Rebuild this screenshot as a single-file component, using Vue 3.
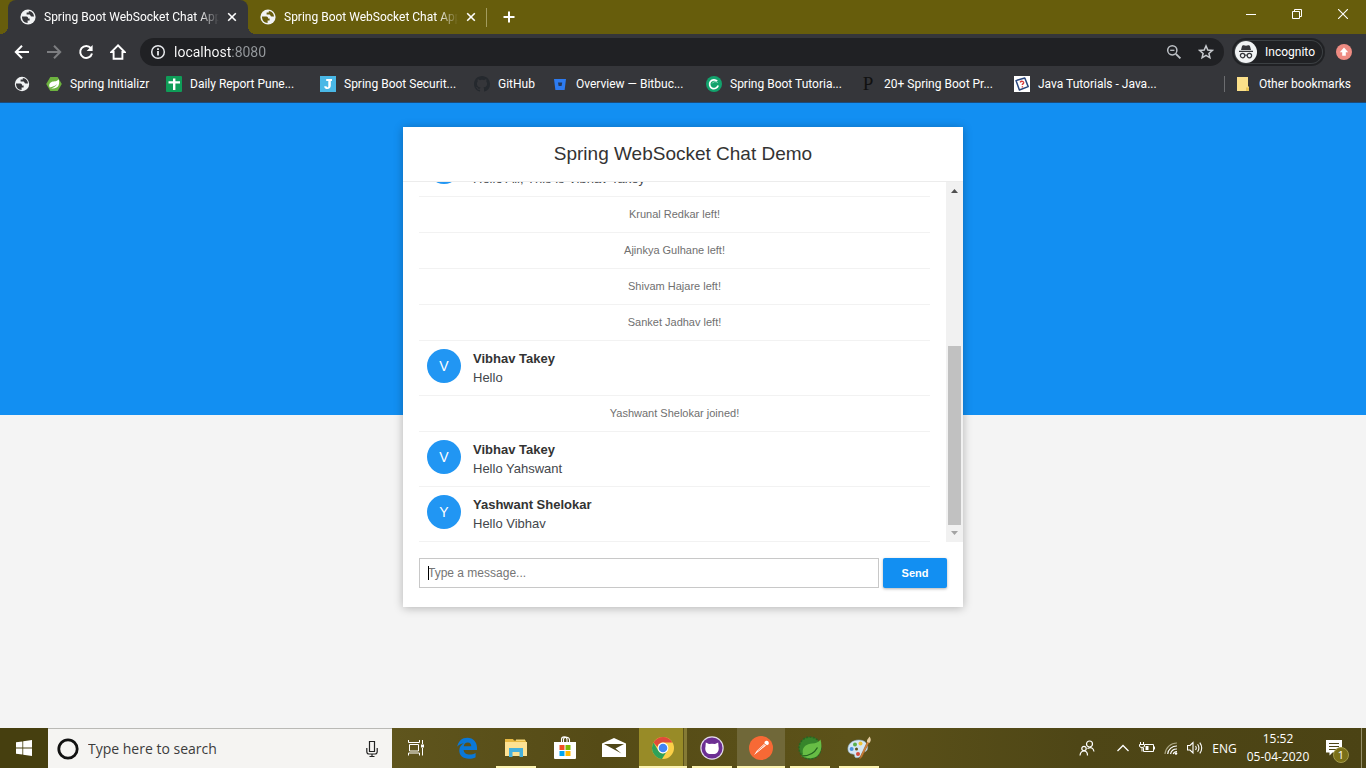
<script setup>
import { ref } from 'vue'

const tabs = [
  { id: 1, title: 'Spring Boot WebSocket Chat App', active: true },
  { id: 2, title: 'Spring Boot WebSocket Chat App', active: false },
]

const bookmarks = [
  { icon: 'globe', label: '', size: 'icon-only' },
  { icon: 'spring', label: 'Spring Initializr', size: 'medium' },
  { icon: 'sheet', label: 'Daily Report Pune...', size: 'long' },
  { icon: 'j', label: 'Spring Boot Securit...', size: 'long' },
  { icon: 'github', label: 'GitHub', size: 'short' },
  { icon: 'bitbucket', label: 'Overview — Bitbuc...', size: 'long' },
  { icon: 'ring', label: 'Spring Boot Tutoria...', size: 'long' },
  { icon: 'p', label: '20+ Spring Boot Pr...', size: 'long' },
  { icon: 'java', label: 'Java Tutorials - Java...', size: 'long' },
]

const messages = [
  { sender: 'Vibhav Takey', text: 'Hello All, This is Vibhav Takey' },
  { event: 'Krunal Redkar left!' },
  { event: 'Ajinkya Gulhane left!' },
  { event: 'Shivam Hajare left!' },
  { event: 'Sanket Jadhav left!' },
  { sender: 'Vibhav Takey', text: 'Hello' },
  { event: 'Yashwant Shelokar joined!' },
  { sender: 'Vibhav Takey', text: 'Hello Yahswant' },
  { sender: 'Yashwant Shelokar', text: 'Hello Vibhav' },
]

const apps = [
  { id: 'edge', label: 'Microsoft Edge' },
  { id: 'explorer', label: 'File Explorer', open: true },
  { id: 'store', label: 'Microsoft Store' },
  { id: 'mail', label: 'Mail' },
  { id: 'chrome', label: 'Google Chrome', focused: true },
  { id: 'ghdesktop', label: 'GitHub Desktop', open: true },
  { id: 'postman', label: 'Postman', lit: true },
  { id: 'sts', label: 'Spring Tool Suite', open: true },
  { id: 'paint', label: 'Paint', open: true },
]

const address = ref('localhost:8080')
const draft = ref('')
const search = ref('')
</script>

<template>
  <div class="desktop">
    <header class="browser">
      <div class="tab-strip">
        <div v-for="tab in tabs" :key="tab.id" class="tab" :class="{ active: tab.active }">
          <svg class="globe" viewBox="0 0 16 16" aria-hidden="true">
            <circle cx="8" cy="8" r="7.6" fill="#f1f3f4" />
            <path d="M2 7.6 H6.4 C7.6 7.6 8 8.4 8 9.4 H9.6 V11.4 H7.6 V14 C4.4 14 1.8 11.4 2 7.6Z M8.8 2 V3.6 H6.6 V5.6 H9.4 C10.4 5.6 10.4 7.6 11.6 7.6 H14 C14 4.6 11.6 2.2 8.8 2Z" :fill="tab.active ? '#35363a' : '#675d0c'" />
          </svg>
          <span class="tab-title">{{ tab.title }}</span>
          <button class="tab-close" aria-label="Close tab">
            <svg viewBox="0 0 10 10"><path d="M1.2 1.2 8.8 8.8M8.8 1.2 1.2 8.8" stroke="#fff" stroke-width="1.6" /></svg>
          </button>
        </div>
        <button class="new-tab" aria-label="New tab">
          <svg viewBox="0 0 12 12"><path d="M6 0.5V11.5M0.5 6H11.5" stroke="#fff" stroke-width="2" /></svg>
        </button>
        <div class="window-controls">
          <button aria-label="Minimise"><svg viewBox="0 0 10 10"><path d="M0 5.5H10" stroke="#fff" /></svg></button>
          <button aria-label="Restore"><svg viewBox="0 0 10 10"><path d="M0.5 2.5H7.5V9.5H0.5ZM2.5 2.5V0.5H9.5V7.5H7.5" stroke="#fff" fill="none" /></svg></button>
          <button aria-label="Close"><svg viewBox="0 0 10 10"><path d="M0 0 10 10M10 0 0 10" stroke="#fff" stroke-width="1.1" /></svg></button>
        </div>
      </div>

      <div class="toolbar">
        <button class="nav" aria-label="Back"><svg viewBox="0 0 16 16"><path d="M15 8H2.5M8 1.8 1.8 8 8 14.2" stroke="#fff" stroke-width="2" fill="none" /></svg></button>
        <button class="nav" aria-label="Forward"><svg viewBox="0 0 16 16"><path d="M1 8H13.5M8 1.8 14.2 8 8 14.2" stroke="#7d7e81" stroke-width="2" fill="none" /></svg></button>
        <button class="nav" aria-label="Reload"><svg viewBox="0 0 16 16"><path d="M12.9 4.2A6 6 0 1 0 14 9.5" stroke="#fff" stroke-width="2" fill="none" /><path d="M14.6 1V7H8.6Z" fill="#fff" /></svg></button>
        <button class="nav" aria-label="Home"><svg viewBox="0 0 16 16"><path d="M8 1.3 1.4 8H3.6V14.8H12.4V8H14.6Z" stroke="#fff" stroke-width="1.9" fill="none" /></svg></button>
        <div class="omnibox">
          <svg class="glyph" viewBox="0 0 16 16" aria-hidden="true"><circle cx="8" cy="8" r="6.3" stroke="#e8eaed" stroke-width="1.5" fill="none" /><path d="M8 7V11.6M8 4.2V6" stroke="#e8eaed" stroke-width="1.8" /></svg>
          <input v-model="address" class="address" type="text" aria-label="Address" />
          <button class="glyph" aria-label="Zoom"><svg viewBox="0 0 16 16"><circle cx="6.3" cy="6.3" r="4.6" stroke="#bdc1c6" stroke-width="1.5" fill="none" /><path d="M4.2 6.3H8.4" stroke="#bdc1c6" stroke-width="1.3" /><path d="M9.8 9.8 14.4 14.4" stroke="#bdc1c6" stroke-width="1.9" /></svg></button>
          <button class="glyph" aria-label="Bookmark this page"><svg viewBox="0 0 16 16"><path d="M8 1.9 9.8 6 14.3 6.4 10.9 9.4 11.9 13.8 8 11.4 4.1 13.8 5.1 9.4 1.7 6.4 6.2 6Z" stroke="#c7cace" stroke-width="1.5" fill="none" /></svg></button>
        </div>
        <button class="incognito">
          <svg viewBox="0 0 22 22" aria-hidden="true"><circle cx="11" cy="11" r="11" fill="#f1f3f4" /><path d="M7 5.2C7.3 4.2 8 4 8.8 4.3L11 4.8 13.2 4.3C14 4 14.7 4.2 15 5.2L16 9H6ZM4 9.8H18V11H4Z" fill="#35363a" /><circle cx="7.6" cy="14.6" r="2.2" stroke="#35363a" stroke-width="1.2" fill="none" /><circle cx="14.4" cy="14.6" r="2.2" stroke="#35363a" stroke-width="1.2" fill="none" /><path d="M9.8 14.4Q11 13.6 12.2 14.4" stroke="#35363a" fill="none" /></svg>
          <span>Incognito</span>
        </button>
        <button class="update" aria-label="Update available"><svg viewBox="0 0 16 16"><circle cx="8" cy="8" r="8" fill="#ee8b82" /><path d="M8 3.6 12.2 8.2H9.8V11.8H6.2V8.2H3.8Z" fill="#fff" /></svg></button>
      </div>

      <nav class="bookmarks" aria-label="Bookmarks">
        <a v-for="b in bookmarks" :key="b.icon" href="#" class="bookmark" :class="b.size" :aria-label="b.label || 'Site'">
          <span v-if="b.icon === 'p'" class="serif-p" aria-hidden="true">P</span>
          <svg v-else viewBox="0 0 16 16" aria-hidden="true">
            <template v-if="b.icon === 'globe'">
              <circle cx="8" cy="8" r="7.2" fill="#f1f3f4" />
              <path d="M2 7.6 H6.4 C7.6 7.6 8 8.4 8 9.4 H9.6 V11.4 H7.6 V14 C4.4 14 1.8 11.4 2 7.6Z M8.8 2 V3.6 H6.6 V5.6 H9.4 C10.4 5.6 10.4 7.6 11.6 7.6 H14 C14 4.6 11.6 2.2 8.8 2Z" fill="#35363a" />
            </template>
            <template v-else-if="b.icon === 'spring'">
              <path d="M4.3 1H11.7L15.8 8 11.7 15H4.3L0.2 8Z" fill="#6db33f" />
              <path d="M12.7 3.2C13.7 6.5 13.2 10 10.5 11.6 8.3 12.9 5.6 12.6 3.7 12.8 6.5 12.2 9.4 11 11.2 8 8.8 10.2 6.4 11 3.6 11.4 2.5 9 3.5 6.6 6 5.8 8.5 5 11 5.6 12.7 3.2Z" fill="#fff" />
            </template>
            <template v-else-if="b.icon === 'sheet'">
              <rect width="16" height="16" rx="1" fill="#0f9d58" />
              <path d="M7 2.5H9.4V5.2H14V7.5H9.4V14H7V7.5H2.5V5.2H7Z" fill="#fff" />
            </template>
            <template v-else-if="b.icon === 'j'">
              <rect width="16" height="16" fill="#4ab8e6" />
              <path d="M6.2 3H12V5H10.8V9.6C10.8 12 9.4 13 7.4 13 5.5 13 4.2 12.1 4.2 10.2H6.6C6.6 11 7 11.3 7.4 11.3 8 11.3 8.3 10.9 8.3 10V5H6.2Z" fill="#fff" />
            </template>
            <template v-else-if="b.icon === 'github'">
              <path d="M8 0C3.58 0 0 3.58 0 8c0 3.54 2.29 6.53 5.47 7.59.4.07.55-.17.55-.38 0-.19-.01-.82-.01-1.49-2.01.37-2.53-.49-2.69-.94-.09-.23-.48-.94-.82-1.13-.28-.15-.68-.52-.01-.53.63-.01 1.08.58 1.23.82.72 1.21 1.87.87 2.33.66.07-.52.28-.87.51-1.07-1.78-.2-3.64-.89-3.64-3.95 0-.87.31-1.59.82-2.15-.08-.2-.36-1.02.08-2.12 0 0 .67-.21 2.2.82.64-.18 1.32-.27 2-.27s1.36.09 2 .27c1.53-1.04 2.2-.82 2.2-.82.44 1.1.16 1.92.08 2.12.51.56.82 1.27.82 2.15 0 3.07-1.87 3.75-3.65 3.95.29.25.54.73.54 1.48 0 1.07-.01 1.93-.01 2.2 0 .21.15.46.55.38A8.01 8.01 0 0 0 16 8c0-4.42-3.58-8-8-8Z" fill="#25292e" />
            </template>
            <template v-else-if="b.icon === 'bitbucket'">
              <path d="M2 3H14L12.6 14H3.4Z" fill="#2d7bf0" />
              <path d="M6 6.4H10.2L9.6 10H6.6Z" fill="#24395c" />
            </template>
            <template v-else-if="b.icon === 'ring'">
              <circle cx="8" cy="8" r="8" fill="#12a36d" />
              <path d="M11.2 5.2A4.4 4.4 0 1 0 12.2 9.6" stroke="#fff" stroke-width="1.7" fill="none" />
              <path d="M11.6 6.6A3.4 3.4 0 0 0 6.2 7.4" stroke="#9fe0c6" stroke-width="1" fill="none" />
            </template>
            <template v-else>
              <rect width="16" height="16" fill="#fff" />
              <path d="M2 4.6 10.8 2 14.2 10.6 5.4 14Z" stroke="#28457c" stroke-width="1.5" fill="none" stroke-linejoin="round" />
              <path d="M6.2 6.4C7 4.8 10 5 9.6 7 9.3 8 8.2 7.8 8.3 9M8.4 10.2V11.4" stroke="#d33a3a" stroke-width="1.4" fill="none" />
            </template>
          </svg>
          <span v-if="b.label">{{ b.label }}</span>
        </a>
        <button class="bookmark other">
          <svg viewBox="0 0 16 16" aria-hidden="true"><path d="M2 1H13V10L14 11V15H2Z" fill="#fbe08a" /><path d="M11 15V11.5H14V15Z" fill="#e9c558" /></svg>
          <span>Other bookmarks</span>
        </button>
      </nav>
    </header>

    <main class="page">
      <section class="chat">
        <h2>Spring WebSocket Chat Demo</h2>
        <div class="viewport">
          <ul>
            <li v-for="(m, i) in messages" :key="i" :class="m.event ? 'event' : 'message'">
              <p v-if="m.event">{{ m.event }}</p>
              <template v-else>
                <i class="avatar">{{ m.sender[0] }}</i>
                <div class="body">
                  <strong>{{ m.sender }}</strong>
                  <p>{{ m.text }}</p>
                </div>
              </template>
            </li>
          </ul>
          <div class="scrollbar" aria-hidden="true">
            <svg viewBox="0 0 17 17"><path d="M5 11H12L8.5 7Z" fill="#505050" /></svg>
            <div class="track"><div class="thumb"></div></div>
            <svg viewBox="0 0 17 17"><path d="M5 6H12L8.5 10Z" fill="#a3a3a3" /></svg>
          </div>
        </div>
        <form class="composer" @submit.prevent>
          <div class="field">
            <input v-model="draft" type="text" placeholder="Type a message..." aria-label="Message" autocomplete="off" />
          </div>
          <button type="submit">Send</button>
        </form>
      </section>
    </main>

    <footer class="taskbar">
      <button class="start" aria-label="Start"><svg viewBox="0 0 16 16"><path d="M0 2.3 6.4 1.4V7.6H0ZM7.2 1.3 16 0V7.6H7.2ZM0 8.4H6.4V14.6L0 13.7ZM7.2 8.4H16V16L7.2 14.7Z" fill="#fff" /></svg></button>
      <div class="search">
        <svg class="cortana" viewBox="0 0 22 22" aria-hidden="true"><circle cx="11" cy="11" r="9.2" stroke="#111" stroke-width="2.8" fill="none" /></svg>
        <input v-model="search" type="text" placeholder="Type here to search" aria-label="Type here to search" />
        <button aria-label="Speak"><svg viewBox="0 0 12 18"><path d="M3.5 1.5H8.5V11.5H3.5ZM0.8 8V11.5Q0.8 14 3 14H9Q11.2 14 11.2 11.5V8M6 14V16.5M3.5 16.5H8.5" stroke="#222" stroke-width="1.2" fill="none" /></svg></button>
      </div>
      <button class="task-view" aria-label="Task view"><svg viewBox="0 0 16 16"><path d="M0.5 0V2.5H11.5V0M0.5 15.5V13H11.5V15.5M1.5 4.5H10.5V11H1.5ZM14.5 0V4M14.5 8V15.5" stroke="#fff" fill="none" /><rect x="13" y="4.5" width="3" height="3" fill="#fff" /></svg></button>
      <div class="apps">
        <button v-for="a in apps" :key="a.id" :aria-label="a.label" :class="{ open: a.open, focused: a.focused, lit: a.lit }">
          <svg viewBox="0 0 24 24" aria-hidden="true">
            <template v-if="a.id === 'edge'">
              <path d="M2.2 10.7C3.3 5 7 1.7 12.3 1.7 18.4 1.7 22 6.2 22 11.6V14H8.6C8.8 17.2 11.5 18.6 14.7 18.6 16.8 18.6 18.8 18 20.6 16.9V21.2C18.6 22.2 16.3 22.7 13.8 22.7 8 22.7 4.3 19.5 4.3 14.5 4.3 11.2 6 8.6 9 7.2 5.8 7.5 3.5 8.9 2.2 10.7ZM8.7 10.3H16.3C16.3 8 15 6.5 12.8 6.5 10.5 6.5 9 8 8.7 10.3Z" fill="#0a78d7" />
            </template>
            <template v-else-if="a.id === 'explorer'">
              <path d="M1 3H9L10 4.5H22V20H1Z" fill="#e8b942" /><path d="M1 6H23V20H1Z" fill="#fde293" /><path d="M12 3.5H21V5H12Z" fill="#f7d774" />
              <path d="M5 12H19V21H15.5V16H8.5V21H5Z" fill="#46b1dc" />
            </template>
            <template v-else-if="a.id === 'store'">
              <path d="M8.5 6V3.5C8.5 0 14 0 14 3.5V6M10.5 6V3.5C10.5 0.5 16.5 0.5 16.5 4V6" stroke="#fff" stroke-width="1.1" fill="none" />
              <path d="M1 6H23V22Q23 23 22 23H2Q1 23 1 22Z" fill="#fff" />
              <path d="M6.5 9H11.5V14H6.5Z" fill="#f25022" /><path d="M12.5 9H17.5V14H12.5Z" fill="#7fba00" /><path d="M6.5 15H11.5V20H6.5Z" fill="#00a4ef" /><path d="M12.5 15H17.5V20H12.5Z" fill="#ffb900" />
            </template>
            <template v-else-if="a.id === 'mail'">
              <path d="M0 7.5 12 2 24 7.5V21H0Z" fill="#fff" /><path d="M2 8H22L13.5 12.5 19.5 17.5Z" fill="#4f4718" />
            </template>
            <template v-else-if="a.id === 'chrome'">
              <circle cx="12" cy="12" r="11" fill="#fbd048" /><path d="M2.5 6.5A11 11 0 0 1 21.5 6.5H12A5.5 5.5 0 0 0 6.5 11Z" fill="#e04a3a" /><path d="M2.5 6.5A11 11 0 0 0 11 23L16 15A5 5 0 0 1 7.3 14.7Z" fill="#2fa158" />
              <circle cx="12" cy="12" r="5.4" fill="#fff" /><circle cx="12" cy="12" r="4.3" fill="#4285f4" />
            </template>
            <template v-else-if="a.id === 'ghdesktop'">
              <circle cx="12" cy="12" r="11.7" fill="#e4dcec" /><circle cx="12" cy="12" r="10.5" fill="#6c2e93" />
              <path d="M5.8 6.5 9 8.1Q12 7.5 15 8.1L18.2 6.5 18.5 10.5C19.5 14.5 17.5 17.5 14.5 18H9.5C6.5 17.5 4.5 14.5 5.5 10.5Z" fill="#fff" />
            </template>
            <template v-else-if="a.id === 'postman'">
              <circle cx="12" cy="12" r="12" fill="#f76935" /><path d="M5 19 8 14.5 15 8 17 9.5 9.5 15.5ZM15.5 7.5A2.2 2.2 0 1 1 18 9.2Z" fill="#fff" /><path d="M8.5 15 15.8 8.7" stroke="#f76935" stroke-width=".7" />
            </template>
            <template v-else-if="a.id === 'sts'">
              <circle cx="12" cy="12" r="11" fill="#36852b" stroke="#2a6521" stroke-width="1.6" stroke-dasharray="2 1.4" /><path d="M22.5 3.5C25 12 22 19.5 16 21.5 11.5 23 7.5 21.5 3.5 20.5L5 18C3.5 11.5 8 8 14 7.5 18 7.2 20.5 6.3 22.5 3.5Z" fill="#67bd45" /><path d="M4 20C11 20 16.5 17 19.5 11.5" stroke="#24641f" stroke-width="1.3" fill="none" />
            </template>
            <template v-else>
              <path d="M1 14C0 8 6 3.8 12 4 18 4.2 21.5 8 20.5 12.5 19.5 17 16 15 15 17.5 14 20 12.5 22.5 8.5 21.5 7 21 8.5 18.5 6.5 18.2 4.5 18 1.5 17.5 1 14Z" fill="#d5e7f3" stroke="#8fb0c8" stroke-width=".6" />
              <circle cx="4.6" cy="13" r="2" fill="#4a93dd" /><circle cx="8" cy="8.5" r="2" fill="#59b04b" /><circle cx="13.5" cy="7.5" r="2" fill="#edc338" /><circle cx="11" cy="18" r="2" fill="#d64b3d" /><circle cx="9.5" cy="13" r="1.5" fill="#5b5119" />
              <path d="M20.5 5.5 13.5 20.5 12.5 23 14.8 21 22 6.5Z" fill="#d98b3d" stroke="#a25e25" stroke-width=".7" /><path d="M20 6C19.5 3 22 2.5 22.2 0.5 24.5 2.5 24 5.5 22.3 7Z" fill="#e8cfa2" />
            </template>
          </svg>
        </button>
      </div>
      <div class="tray">
        <button class="people" aria-label="People"><svg viewBox="0 0 16 16"><circle cx="10.5" cy="4" r="3" stroke="#fff" stroke-width="1.2" fill="none" /><circle cx="5" cy="8.5" r="2.2" stroke="#fff" stroke-width="1.2" fill="none" /><path d="M1 15.5Q1.5 11 5 11 8.5 11 8.5 15.5M8.5 8.5Q14 6 15 11.5" stroke="#fff" stroke-width="1.2" fill="none" /></svg></button>
        <button aria-label="Show hidden icons"><svg viewBox="0 0 16 16"><path d="M2.5 11 8 5.5 13.5 11" stroke="#fff" stroke-width="1.3" fill="none" /></svg></button>
        <button aria-label="Battery"><svg viewBox="0 0 16 16"><path d="M6 4.5H14.5V11.5H4.5V8M15.5 6.5V9.5M1.5 2V4M4.5 2V4M0.5 4.5H5.5V6Q5.5 7.5 3 7.5 0.5 7.5 0.5 6ZM3 7.5V11.5" stroke="#fff" fill="none" /><path d="M6.5 6H9.5V10H6.5Z" fill="#fff" /></svg></button>
        <button aria-label="Network"><svg viewBox="0 0 16 16"><path d="M2 14A12 12 0 0 1 14 3" stroke="#aaa582" stroke-width="1.2" fill="none" /><path d="M4.7 14A9 9 0 0 1 14 6M7.5 14A6.5 6.5 0 0 1 14 9M10.2 14A4 4 0 0 1 14 11.5" stroke="#fff" stroke-width="1.2" fill="none" /><circle cx="13" cy="13.5" r="1.3" fill="#fff" /></svg></button>
        <button aria-label="Volume"><svg viewBox="0 0 16 16"><path d="M0.5 5.5H3L6 2.5V13L3 10H0.5ZM8.5 6Q10 8 8.5 10M10.6 4.2Q13.2 8 10.6 11.8M12.8 2.6Q16.6 8 12.8 13.4" stroke="#fff" stroke-width="1.1" fill="none" /></svg></button>
        <button class="lang">ENG</button>
        <button class="clock"><span>15:52</span><span>05-04-2020</span></button>
        <button class="notify" aria-label="Notifications">
          <svg viewBox="0 0 16 16"><path d="M0 0H16V12.5H6.5L3.5 15.5V12.5H0Z" fill="#fff" /><path d="M3 3.5H13M3 6.5H13M3 9.5H10" stroke="#4e4616" /></svg>
          <span class="badge">1</span>
        </button>
        <button class="show-desktop" aria-label="Show desktop"></button>
      </div>
    </footer>
  </div>
</template>

<style>
body {
  margin: 0;
}
</style>

<style scoped>
* {
  box-sizing: border-box;
}
.desktop {
  min-height: 100vh;
  display: flex;
  flex-direction: column;
  font-family: "Open Sans", "Noto Sans", sans-serif;
  font-size: 12px;
}
button {
  border: 0;
  padding: 0;
  margin: 0;
  background: none;
  color: inherit;
  font: inherit;
  display: flex;
  align-items: center;
  justify-content: center;
  flex: none;
}
input {
  border: 0;
  padding: 0;
  margin: 0;
  background: none;
  font: inherit;
  min-width: 0;
  outline: none;
}
svg {
  display: block;
  flex: none;
}

/* browser */
.browser {
  background: #35363a;
  color: #fff;
  border-bottom: 1px solid #1d4a78;
  font-family: Roboto, "Open Sans", sans-serif;
}
.tab-strip {
  height: 34px;
  padding-left: 8px;
  display: flex;
  background: #675d0c;
}
.tab {
  width: 240px;
  height: 34px;
  padding: 0 11px 0 12px;
  display: flex;
  align-items: center;
  position: relative;
}
.tab:not(.active) {
  width: 239px;
}
.tab:not(.active)::after {
  content: "";
  position: absolute;
  right: 0;
  top: 8px;
  height: 19px;
  border-right: 1px solid #a39c5e;
}
.tab.active {
  background: #35363a;
  border-radius: 8px 8px 0 0;
}
.tab.active::before,
.tab.active::after {
  content: "";
  position: absolute;
  bottom: 0;
  width: 8px;
  height: 8px;
}
.tab.active::before {
  left: -8px;
  background: radial-gradient(circle at 0 0, transparent 8px, #35363a 8px);
}
.tab.active::after {
  right: -8px;
  background: radial-gradient(circle at 100% 0, transparent 8px, #35363a 8px);
}
.globe {
  width: 16px;
  height: 16px;
}
.tab-title {
  flex: 1;
  margin: 0 6px 0 8px;
  overflow: hidden;
  white-space: nowrap;
  mask-image: linear-gradient(to left, transparent 2px, #000 22px);
}
.tab-close {
  width: 10px;
  height: 10px;
}
.tab-close svg,
.window-controls svg {
  width: 10px;
  height: 10px;
}
.new-tab {
  width: 44px;
}
.new-tab svg {
  width: 12px;
  height: 12px;
}
.window-controls {
  margin-left: auto;
  height: 28px;
  display: flex;
}
.window-controls button {
  width: 46px;
}
.toolbar {
  height: 35px;
  padding: 0 14px;
  display: flex;
  align-items: center;
  gap: 16px;
}
.nav,
.nav svg {
  width: 16px;
  height: 16px;
}
.omnibox {
  flex: 1;
  height: 28px;
  margin: 0 -8px 0 -2px;
  padding: 0 10px;
  display: flex;
  align-items: center;
  gap: 16px;
  border-radius: 14px;
  background: #202124;
}
.glyph,
.glyph svg {
  width: 16px;
  height: 16px;
}
.address {
  flex: 1;
  margin-left: -8px;
  font-size: 14px;
  color: transparent;
  background: linear-gradient(to right, #fff 57px, #969a9e 57px);
  background-clip: text;
}
.incognito {
  height: 28px;
  padding: 0 10px 0 3px;
  gap: 8px;
  border-radius: 14px;
  background: #202124;
  box-shadow: inset 0 0 0 2px #202124, inset 0 0 0 3px #3c4043;
  font-size: 12px;
}
.incognito svg {
  width: 22px;
  height: 22px;
}
.update {
  margin-left: -5px;
}
.update svg {
  width: 16px;
  height: 16px;
}
.bookmarks {
  height: 33px;
  padding: 0 7px 3px 6px;
  display: flex;
  align-items: center;
}
.bookmark {
  padding: 0 8px;
  display: flex;
  align-items: center;
  justify-content: flex-start;
  gap: 8px;
  white-space: nowrap;
  color: #fff;
  text-decoration: none;
}
.bookmark svg {
  width: 16px;
  height: 16px;
}
.icon-only {
  width: 32px;
}
.short {
  width: 78px;
}
.medium {
  width: 120px;
}
.long {
  width: 154px;
}
.other {
  margin-left: auto;
  padding-left: 10px;
  border-left: 1px solid #6c6d70;
}
.serif-p {
  width: 16px;
  text-align: center;
  font: 19px "Liberation Serif", serif;
  color: #111;
}

/* chat page */
.page {
  flex: 1;
  padding: 24px 16px;
  background: linear-gradient(#128ff2 50%, #f4f4f4 50%);
  font-family: "Liberation Sans", Arial, sans-serif;
  color: #333;
}
.chat {
  max-width: 560px;
  margin: 0 auto;
  background: #fff;
  box-shadow: 0 1px 9px rgba(0, 0, 0, 0.27);
}
.chat h2 {
  margin: 0;
  padding: 12px 16px;
  border-bottom: 1px solid #ececec;
  text-align: center;
  font-size: 19px;
  line-height: 30px;
  font-weight: 400;
}
.viewport {
  height: 360px;
  display: flex;
}
.viewport ul {
  flex: 1;
  margin: 0;
  padding: 0 16px;
  overflow: hidden;
  display: flex;
  flex-direction: column;
  justify-content: flex-end;
  list-style: none;
}
.viewport li {
  flex: none;
  border-bottom: 1px solid #f2f2f2;
}
.viewport p {
  margin: 0;
}
.event {
  padding: 8px 0;
  text-align: center;
  color: #707070;
  font-size: 11px;
  line-height: 19px;
}
.message {
  padding: 8px;
  display: flex;
  gap: 12px;
  font-size: 13px;
  line-height: 19px;
}
.avatar {
  width: 34px;
  height: 34px;
  border-radius: 50%;
  background: #2196f3;
  color: #fff;
  text-align: center;
  font-style: normal;
  font-size: 14px;
  line-height: 34px;
}
.body strong {
  display: block;
}
.body p {
  color: #43464b;
}
.scrollbar {
  width: 17px;
  display: flex;
  flex-direction: column;
  background: #f1f1f1;
}
.scrollbar svg {
  width: 17px;
  height: 17px;
}
.track {
  flex: 1;
  padding: 0 2px;
  display: flex;
  align-items: flex-end;
}
.thumb {
  width: 100%;
  height: 55%;
  background: #c1c1c1;
}
.composer {
  padding: 16px 16px 19px;
  display: flex;
  gap: 4px;
}
.field {
  flex: 1;
  display: flex;
  position: relative;
}
.field::before {
  content: "";
  position: absolute;
  left: 9px;
  top: 8px;
  width: 1px;
  height: 14px;
  background: #000;
}
.field input {
  flex: 1;
  height: 30px;
  padding: 0 8px;
  border: 1px solid #c8c8c8;
  font-size: 12px;
}
.field input::placeholder {
  color: #757575;
}
.composer button {
  width: 64px;
  height: 30px;
  border-radius: 2px;
  background: #128ff2;
  box-shadow: 0 1px 3px rgba(0, 0, 0, 0.3);
  color: #fff;
  font-size: 11px;
  font-weight: 700;
}

/* taskbar */
.taskbar {
  height: 40px;
  display: flex;
  background: linear-gradient(to right, #463f0f 48px, #5f551d 392px, #554b16 600px, #5c5219 850px, #4e4616 1080px, #4b4314);
  color: #fff;
}
.start {
  width: 48px;
}
.start svg,
.task-view svg {
  width: 16px;
  height: 16px;
}
.search {
  width: 344px;
  padding: 0 14px 0 9px;
  display: flex;
  align-items: center;
  gap: 9px;
  border-top: 1px solid #b9b9b5;
  background: #f5f4f2;
}
.cortana {
  width: 22px;
  height: 22px;
}
.search input {
  flex: 1;
  font-size: 14px;
  color: #333;
}
.search input::placeholder {
  color: #3c3c3c;
}
.search button svg {
  width: 12px;
  height: 18px;
}
.task-view {
  width: 48px;
}
.apps {
  margin-left: 3px;
  display: flex;
  gap: 1px;
}
.apps button {
  width: 48px;
  height: 40px;
  position: relative;
}
.apps svg {
  width: 24px;
  height: 24px;
}
.apps .open::after,
.apps .lit::after,
.apps .focused::after {
  content: "";
  position: absolute;
  left: 4px;
  right: 4px;
  bottom: 0;
  height: 2px;
  background: #fdf4b0;
}
.apps .lit::after,
.apps .focused::after {
  left: 0;
  right: 0;
}
.apps .lit {
  background: #706839;
}
.apps .focused {
  background: linear-gradient(to right, #988b27 44px, #5d541a 44px, #5d541a 45px, #857a35 45px);
}
.tray {
  margin-left: auto;
  display: flex;
  align-items: center;
}
.tray button {
  width: 24px;
  height: 40px;
}
.tray svg {
  width: 16px;
  height: 16px;
}
.tray .people {
  width: 48px;
}
.tray .lang {
  width: 35px;
}
.tray .clock {
  width: 72px;
  flex-direction: column;
  line-height: 18px;
}
.tray .notify {
  width: 47px;
  padding-right: 8px;
  position: relative;
}
.badge {
  position: absolute;
  left: 19px;
  top: 19px;
  width: 16px;
  height: 16px;
  border: 1px solid #a39a4a;
  border-radius: 50%;
  background: #7b7018;
  text-align: center;
  font-size: 11px;
  line-height: 14px;
}
.tray .show-desktop {
  width: 5px;
  border-left: 1px solid #948e6a;
}
</style>
